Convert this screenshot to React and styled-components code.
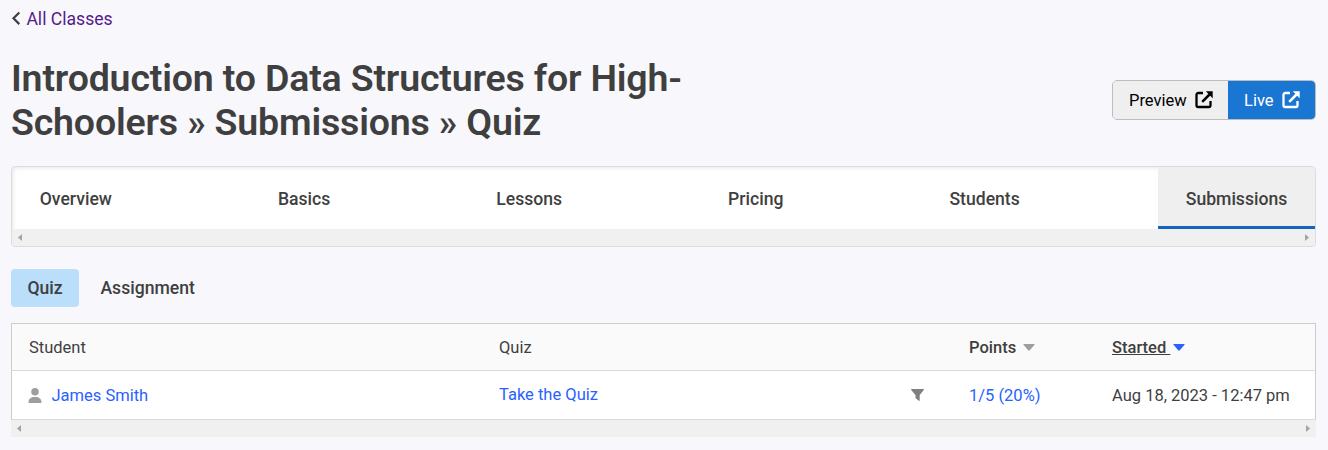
import React from 'react';
import styled, { createGlobalStyle } from 'styled-components';
import { FaUser } from 'react-icons/fa6';

const GlobalStyle = createGlobalStyle`
  * { box-sizing: border-box; }
  body {
    margin: 0;
    background: #f7f7fc;
    color: #3f3f3f;
    font-family: Roboto, "Liberation Sans", sans-serif;
    font-size: 16.5px;
  }
`
const Page = styled.main`
  padding: 8px 12px 0 11px;
  height: 450px;
  overflow: hidden;
`
const BackLink = styled.a`
  display: flex;
  align-items: center;
  gap: 5.4px;
  height: 21px;
  font-size: 17.6px;
  color: #551a8b;
  svg { color: #3f3f3f; }
`
const Header = styled.header`
  display: flex;
  justify-content: space-between;
  align-items: center;
  margin-top: 27px;
  height: 88px;
`
const Title = styled.h1`
  margin: 0;
  width: 720px;
  font-size: 37.5px;
  line-height: 44px;
  letter-spacing: -0.17px;
  font-weight: 600;
`
const ButtonGroup = styled.div`
  display: flex;
  height: 40px;
  border: 1px solid #bdbdbd;
  border-radius: 5px;
  overflow: hidden;
`
const HeaderButton = styled.button`
  display: flex;
  align-items: center;
  gap: 8px;
  width: ${({ $primary }) => ($primary ? '87px' : '115px')};
  padding: 0 0 0 16px;
  border: 0;
  font: inherit;
  font-size: 16.5px;
  color: ${({ $primary }) => ($primary ? '#fff' : '#000')};
  background: ${({ $primary }) => ($primary ? '#1976d2' : '#efefef')};
`
const TabBar = styled.nav`
  margin-top: 22px;
  border: 1px solid #dcdcdc;
  border-radius: 4px;
  background: #fff;
  overflow: hidden;
  box-shadow: inset 1px 1px 4px rgba(0, 0, 0, 0.1);
`
const Tabs = styled.div`
  display: flex;
  justify-content: space-between;
  height: 62px;
`
const Tab = styled.a`
  display: flex;
  align-items: center;
  padding: 5px 27.7px 0;
  font-size: 17.6px;
  font-weight: 500;
  border-bottom: 3px solid ${({ $active }) => ($active ? '#1565c0' : 'transparent')};
  background: ${({ $active }) => ($active ? '#efefef' : 'transparent')};
`
const Scrollbar = styled.div`
  display: flex;
  justify-content: space-between;
  align-items: center;
  height: 17px;
  padding: 0 6px;
  background: #f0f0f0;
  svg { display: block; }
`
const SubTabs = styled.div`
  display: flex;
  gap: 5px;
  margin-top: 22px;
`
const SubTab = styled.a`
  height: 38px;
  padding: 0 16.4px;
  line-height: 38px;
  font-size: 17.6px;
  font-weight: 500;
  border-radius: 4px;
  background: ${({ $active }) => ($active ? '#bbdefb' : 'transparent')};
`
const TableWrap = styled.div`
  margin-top: 16px;
`
const Row = styled.div`
  display: grid;
  grid-template-columns: 470px 470px 143px 1fr;
  height: ${({ $head }) => ($head ? '48px' : '49px')};
  border: 1px solid #ccc;
  border-top-width: ${({ $head }) => ($head ? '1px' : '0')};
  border-bottom-color: #dadada;
  background: ${({ $head }) => ($head ? '#fafafa' : '#fff')};
`
const Cell = styled.div`
  display: flex;
  align-items: center;
  padding: 0 17px;
  white-space: nowrap;
  font-weight: ${({ $sort }) => ($sort ? 500 : 400)};
  svg { flex: none; }
`
const Link = styled.a`
  color: #2962ff;
`
const QuizLink = styled(Link)`
  padding-bottom: 2px;
`
const UserIcon = styled(FaUser)`
  width: 14px;
  height: 15px;
  margin-left: -1px;
  margin-right: 9.5px;
  color: #9e9e9e;
`
const FilterIcon = styled.svg`
  margin-left: auto;
  margin-right: 11px;
  color: #808080;
`
const Sorted = styled.span`
  white-space: pre;
  text-decoration: ${({ $active }) => ($active ? 'underline' : 'none')};
`
const SortIcon = styled.svg`
  margin-left: 3px;
  margin-top: 1px;
  color: ${({ $active }) => ($active ? '#2962ff' : '#9e9e9e')};
`

const Chevron = () => (
  <svg width="10" height="15" viewBox="0 0 10 15" fill="none" stroke="currentColor">
    <path d="M8.3 1.5L2.5 7.3l5.8 5.8" strokeWidth="2.2" />
  </svg>
)

const Caret = ({ active }) => (
  <SortIcon $active={active} width="12" height="7" viewBox="0 0 12 7">
    <path d="M.8 0h10.4q.8 0 .3.8L6.8 6.3q-.8.8-1.6 0L.5.8Q0 0 .8 0z" fill="currentColor" />
  </SortIcon>
)

const Filter = () => (
  <FilterIcon width="13" height="12" viewBox="0 0 13 12">
    <path d="M.7 0h11.6q1 .1.5 1L8.7 6v5.4q-.2.7-.8.4L5 9.6q-.5-.3-.5-.8V6L.2 1Q-.2.1.7 0z" fill="currentColor" />
  </FilterIcon>
)

const External = () => (
  <svg width="18" height="18" viewBox="0 0 18 18" fill="none" stroke="currentColor">
    <path d="M8 2H3.2A1.7 1.7 0 0 0 1.5 3.7v10.6A1.7 1.7 0 0 0 3.2 16h10.6a1.7 1.7 0 0 0 1.7-1.7V10" strokeWidth="2.3" />
    <path d="M7.2 10.8L14.5 3.5" strokeWidth="2.5" />
    <path d="M10.8.3H17.7V7.2z" fill="currentColor" stroke="none" />
  </svg>
)

const Arrows = () => (
  <Scrollbar>
    <svg width="4" height="7"><path d="M4 0v7L0 3.5z" fill="#a3a3a3" /></svg>
    <svg width="4" height="7"><path d="M0 0v7l4-3.5z" fill="#a3a3a3" /></svg>
  </Scrollbar>
)

const tabs = ['Overview', 'Basics', 'Lessons', 'Pricing', 'Students', 'Submissions'];

const App = () => {
  return (
    <>
      <GlobalStyle />
      <Page>
        <BackLink><Chevron />All Classes</BackLink>
        <Header>
          <Title>Introduction to Data Structures for High-Schoolers » Submissions » Quiz</Title>
          <ButtonGroup>
            <HeaderButton>Preview <External /></HeaderButton>
            <HeaderButton $primary>Live <External /></HeaderButton>
          </ButtonGroup>
        </Header>
        <TabBar>
          <Tabs>
            {tabs.map((tab) => <Tab key={tab} $active={tab === 'Submissions'}>{tab}</Tab>)}
          </Tabs>
          <Arrows />
        </TabBar>
        <SubTabs>
          <SubTab $active>Quiz</SubTab>
          <SubTab>Assignment</SubTab>
        </SubTabs>
        <TableWrap>
          <Row $head>
            <Cell>Student</Cell>
            <Cell>Quiz</Cell>
            <Cell $sort><Sorted>Points </Sorted><Caret /></Cell>
            <Cell $sort><Sorted $active>Started </Sorted><Caret active /></Cell>
          </Row>
          <Row>
            <Cell><UserIcon /><Link>James Smith</Link></Cell>
            <Cell><QuizLink>Take the Quiz</QuizLink><Filter /></Cell>
            <Cell><Link>1/5 (20%)</Link></Cell>
            <Cell>Aug 18, 2023 - 12:47 pm</Cell>
          </Row>
          <Arrows />
        </TableWrap>
      </Page>
    </>
  );
};

export default App;
